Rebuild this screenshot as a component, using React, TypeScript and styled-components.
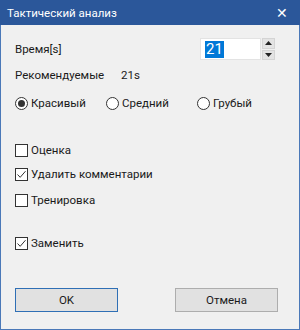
import React from "react";
import styled, { createGlobalStyle } from "styled-components";

const Global = createGlobalStyle`
  html, body { margin: 0; padding: 0; background: #ffffff; }
  body { font-family: Roboto, "Noto Sans", sans-serif; font-size: 11.5px; color: #1a1a1a; }
  * { box-sizing: border-box; }
`;

const Window = styled.div`
  width: 300px;
  height: 330px;
  display: flex;
  flex-direction: column;
  background: #f0f0f0;
  border: 1px solid #4a78b8;
  border-top: none;
`;

const TitleBar = styled.div`
  height: 25px;
  margin: 0 -1px;
  background: #2b579a;
  color: #ffffff;
  display: flex;
  align-items: center;
  justify-content: space-between;
  padding: 0 12px 0 7px;
  font-size: 11.5px;
`;

const Close = styled.span`
  font-size: 14px;
  line-height: 1;
`;

const Content = styled.div`
  flex: 1;
  display: flex;
  flex-direction: column;
  padding: 0 24px 0 14px;
`;

const Row = styled.div<{ $mt: number; $h?: number }>`
  margin-top: ${(p) => p.$mt}px;
  height: ${(p) => p.$h ?? 16}px;
  display: flex;
  align-items: center;
`;

const Label = styled.span<{ $w?: number }>`
  width: ${(p) => (p.$w ? `${p.$w}px` : "auto")};
  white-space: nowrap;
`;

const Spacer = styled.div`
  flex: 1;
`;

const Spin = styled.div`
  display: flex;
  height: 22px;
  gap: 1px;
`;

const SpinInput = styled.div`
  width: 61px;
  height: 22px;
  background: #ffffff;
  border: 1px solid #e3e3e3;
  display: flex;
  align-items: center;
  padding-left: 4px;
`;

const Selected = styled.span`
  background: #0078d7;
  color: #ffffff;
  font-size: 15px;
  line-height: 17px;
  padding: 0 1px;
`;

const SpinButtons = styled.div`
  width: 13px;
  display: flex;
  flex-direction: column;
  gap: 1px;
`;

const SpinButton = styled.div`
  flex: 1;
  background: #e3e3e3;
  border: 1px solid #d4d4d4;
  display: flex;
  align-items: center;
  justify-content: center;
`;

const RadioGroup = styled.div`
  display: grid;
  grid-template-columns: 91px 91px 1fr;
  width: 100%;
`;

const Option = styled.label`
  display: flex;
  align-items: center;
  gap: 3px;
  white-space: nowrap;
`;

const RadioCircle = styled.span<{ $on?: boolean }>`
  width: 13px;
  height: 13px;
  border-radius: 50%;
  border: 1px solid #333333;
  background: #ffffff;
  display: flex;
  align-items: center;
  justify-content: center;
  &::after {
    content: "";
    width: 7px;
    height: 7px;
    border-radius: 50%;
    background: ${(p) => (p.$on ? "#333333" : "transparent")};
  }
`;

const CheckBox = styled.span`
  width: 13px;
  height: 13px;
  border: 1px solid #333333;
  background: #ffffff;
  display: flex;
  align-items: center;
  justify-content: center;
`;

const Buttons = styled.div`
  margin-top: 37px;
  margin-right: -3px;
  display: flex;
  justify-content: space-between;
`;

const Button = styled.div<{ $default?: boolean }>`
  width: 103px;
  height: 24px;
  background: #e1e1e1;
  border: 1px solid ${(p) => (p.$default ? "#2f6fb5" : "#adadad")};
  display: flex;
  align-items: center;
  justify-content: center;
`;

const Check = () => (
  <svg width="11" height="11" viewBox="0 0 11 11">
    <path d="M1.5 5.5 L4.2 8.3 L9.5 2.2" fill="none" stroke="#333" strokeWidth="1" />
  </svg>
);

const Arrow = ({ up }: { up?: boolean }) => (
  <svg width="7" height="4" viewBox="0 0 7 4">
    <path d={up ? "M0 4 L3.5 0 L7 4 Z" : "M0 0 L7 0 L3.5 4 Z"} fill="#222" />
  </svg>
);

export default function App() {
  return (
    <>
      <Global />
      <Window>
        <TitleBar>
          <span>Тактический анализ</span>
          <Close>✕</Close>
        </TitleBar>
        <Content>
          <Row $mt={13} $h={22}>
            <Label>Время[s]</Label>
            <Spacer />
            <Spin>
              <SpinInput>
                <Selected>21</Selected>
              </SpinInput>
              <SpinButtons>
                <SpinButton>
                  <Arrow up />
                </SpinButton>
                <SpinButton>
                  <Arrow />
                </SpinButton>
              </SpinButtons>
            </Spin>
          </Row>
          <Row $mt={7}>
            <Label $w={106}>Рекомендуемые</Label>
            <Label>21s</Label>
          </Row>
          <Row $mt={12}>
            <RadioGroup>
              <Option>
                <RadioCircle $on />
                Красивый
              </Option>
              <Option>
                <RadioCircle />
                Средний
              </Option>
              <Option>
                <RadioCircle />
                Грубый
              </Option>
            </RadioGroup>
          </Row>
          <Row $mt={31}>
            <Option>
              <CheckBox />
              Оценка
            </Option>
          </Row>
          <Row $mt={8}>
            <Option>
              <CheckBox>
                <Check />
              </CheckBox>
              Удалить комментарии
            </Option>
          </Row>
          <Row $mt={10}>
            <Option>
              <CheckBox />
              Тренировка
            </Option>
          </Row>
          <Row $mt={27}>
            <Option>
              <CheckBox>
                <Check />
              </CheckBox>
              Заменить
            </Option>
          </Row>
          <Buttons>
            <Button $default>OK</Button>
            <Button>Отмена</Button>
          </Buttons>
        </Content>
      </Window>
    </>
  );
}
